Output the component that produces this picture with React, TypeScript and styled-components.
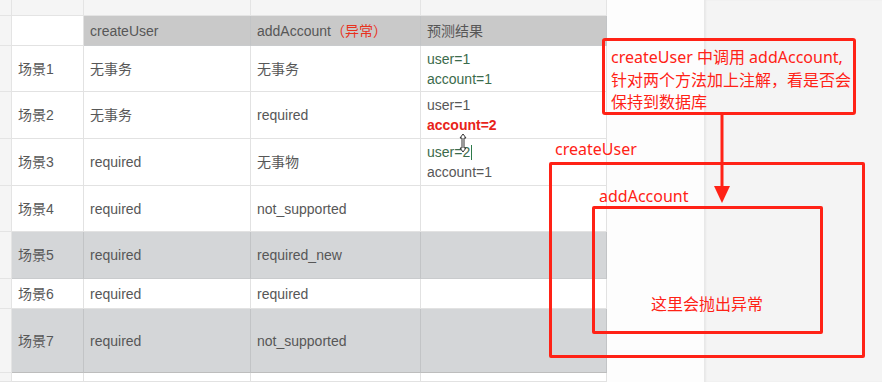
import React from 'react'
import styled, { createGlobalStyle } from 'styled-components'

const GlobalStyle = createGlobalStyle`
  html, body {
    margin: 0;
    padding: 0;
    background: #ffffff;
  }
  * { box-sizing: border-box; }
`;

const RED = '#ff2216';
const FONT = `"Liberation Sans", "Noto Sans CJK SC", sans-serif`;
const NOTE_FONT = `"Noto Sans", "Noto Sans CJK SC", sans-serif`;

const Page = styled.div`
  position: relative;
  width: 882px;
  height: 382px;
  overflow: hidden;
  display: flex;
  font-family: ${FONT};
`;

const Sheet = styled.div`
  width: 607px;
  height: 382px;
  display: grid;
  grid-template-columns: 12px 72px 167px 170px 186px;
  grid-template-rows: 16px 30px 46px 47px 47px 46px 47px 30px 64px 1fr;
`;

const Blank = styled.div`
  width: 97px;
  background: #fdfdfd;
`;

const SidePanel = styled.div`
  flex: 1;
  background: #f4f4f4;
  box-shadow: inset 2px 0 2px rgba(0, 0, 0, 0.05);
`;

const Strip = styled.div`
  background: #f5f5f5;
  border-right: 1px solid #e4e4e4;
  border-bottom: 1px solid #e4e4e4;
`;

const Gutter = styled.div`
  background: #f5f5f5;
  border-right: 1px solid #e4e4e4;
  border-bottom: 1px solid #e4e4e4;
`;

type Tone = 'white' | 'head' | 'gray';

const Cell = styled.div<{ $tone: Tone; $last?: boolean }>`
  display: flex;
  flex-direction: column;
  justify-content: center;
  padding-left: 6px;
  font-size: 14px;
  line-height: 20px;
  color: #575757;
  white-space: nowrap;
  background: ${(p) => (p.$tone === 'head' ? '#c9c9c9' : p.$tone === 'gray' ? '#d4d6d8' : '#ffffff')};
  border-right: 1px solid ${(p) => (p.$tone === 'white' ? '#e2e2e2' : '#c2c4c6')};
  border-bottom: 1px solid ${(p) => (p.$last ? '#bdbdbd' : p.$tone === 'white' ? '#e2e2e2' : '#c9cbcd')};
`;

const Line = styled.span<{ $kind?: 'green' | 'alert' }>`
  color: ${(p) => (p.$kind === 'green' ? '#3b6b4b' : p.$kind === 'alert' ? '#e8231a' : '#575757')};
  font-weight: ${(p) => (p.$kind === 'alert' ? 700 : 400)};
`;

const Warn = styled.span`
  color: #e8321e;
`;

const Caret = styled.span`
  display: inline-block;
  width: 1px;
  height: 15px;
  margin-left: 1px;
  vertical-align: -3px;
  background: #2e7a4a;
`;

const Cursor = styled.svg`
  position: absolute;
  left: 457px;
  top: 133px;
`;

const NoteBox = styled.div`
  position: absolute;
  left: 602px;
  top: 38px;
  width: 254px;
  height: 77px;
  border: 3px solid ${RED};
  border-radius: 3px;
  padding: 5px 0 0 6px;
  color: ${RED};
  font-family: ${NOTE_FONT};
  font-size: 16px;
  line-height: 22.5px;
  white-space: nowrap;
`;

const Frame = styled.div<{ $x: number; $y: number; $w: number; $h: number }>`
  position: absolute;
  left: ${(p) => p.$x}px;
  top: ${(p) => p.$y}px;
  width: ${(p) => p.$w}px;
  height: ${(p) => p.$h}px;
  border: 3px solid ${RED};
  border-radius: 2px;
`;

const Label = styled.div<{ $x: number; $y: number }>`
  position: absolute;
  left: ${(p) => p.$x}px;
  top: ${(p) => p.$y}px;
  color: ${RED};
  font-family: ${NOTE_FONT};
  font-size: 16px;
  line-height: 20px;
  white-space: nowrap;
`;

const Arrow = styled.svg`
  position: absolute;
  left: 712px;
  top: 114px;
`;

type Row = { tone: Tone; cells: React.ReactNode[]; last?: boolean };

const rows: Row[] = [
  {
    tone: 'white',
    cells: [
      '场景1',
      '无事务',
      '无事务',
      <>
        <Line $kind="green">user=1</Line>
        <Line $kind="green">account=1</Line>
      </>,
    ],
  },
  {
    tone: 'white',
    cells: [
      '场景2',
      '无事务',
      'required',
      <>
        <Line>user=1</Line>
        <Line $kind="alert">account=2</Line>
      </>,
    ],
  },
  {
    tone: 'white',
    cells: [
      '场景3',
      'required',
      '无事物',
      <>
        <Line $kind="green">
          user=2<Caret />
        </Line>
        <Line>account=1</Line>
      </>,
    ],
  },
  { tone: 'white', cells: ['场景4', 'required', 'not_supported', ''] },
  { tone: 'gray', cells: ['场景5', 'required', 'required_new', ''] },
  { tone: 'white', cells: ['场景6', 'required', 'required', ''] },
  { tone: 'gray', cells: ['场景7', 'required', 'not_supported', ''], last: true },
  { tone: 'white', cells: ['', '', '', ''] },
];

const App = () => {
  return (
    <Page>
      <GlobalStyle />
      <Sheet>
        <Strip />
        <Strip />
        <Strip />
        <Strip />
        <Strip />

        <Gutter />
        <Cell $tone="white" />
        <Cell $tone="head">createUser</Cell>
        <Cell $tone="head">
          <span>
            addAccount<Warn>（异常）</Warn>
          </span>
        </Cell>
        <Cell $tone="head">预测结果</Cell>

        {rows.map((row, i) => (
          <React.Fragment key={i}>
            <Gutter />
            {row.cells.map((c, j) => (
              <Cell key={j} $tone={row.tone} $last={row.last}>
                {c}
              </Cell>
            ))}
          </React.Fragment>
        ))}
      </Sheet>
      <Blank />
      <SidePanel />

      <Cursor width="12" height="20" viewBox="0 0 12 20">
        <path d="M6 1 L9 5 L7 5 L7 15 L9 15 L6 19 L3 15 L5 15 L5 5 L3 5 Z" fill="#ffffff" stroke="#333333" strokeWidth="1" />
      </Cursor>

      <NoteBox>
        createUser 中调用 addAccount,
        <br />
        针对两个方法加上注解，看是否会
        <br />
        保持到数据库
      </NoteBox>

      <Arrow width="20" height="92" viewBox="0 0 20 92">
        <rect x="8.5" y="0" width="3" height="76" fill={RED} />
        <path d="M2 72 L18 72 L10 89 Z" fill={RED} />
      </Arrow>

      <Label $x={555} $y={139}>createUser</Label>
      <Frame $x={549} $y={162} $w={316} $h={196} />
      <Label $x={599} $y={186}>addAccount</Label>
      <Frame $x={592} $y={206} $w={231} $h={128} />
      <Label $x={651} $y={294}>这里会抛出异常</Label>
    </Page>
  )
}

export default App
